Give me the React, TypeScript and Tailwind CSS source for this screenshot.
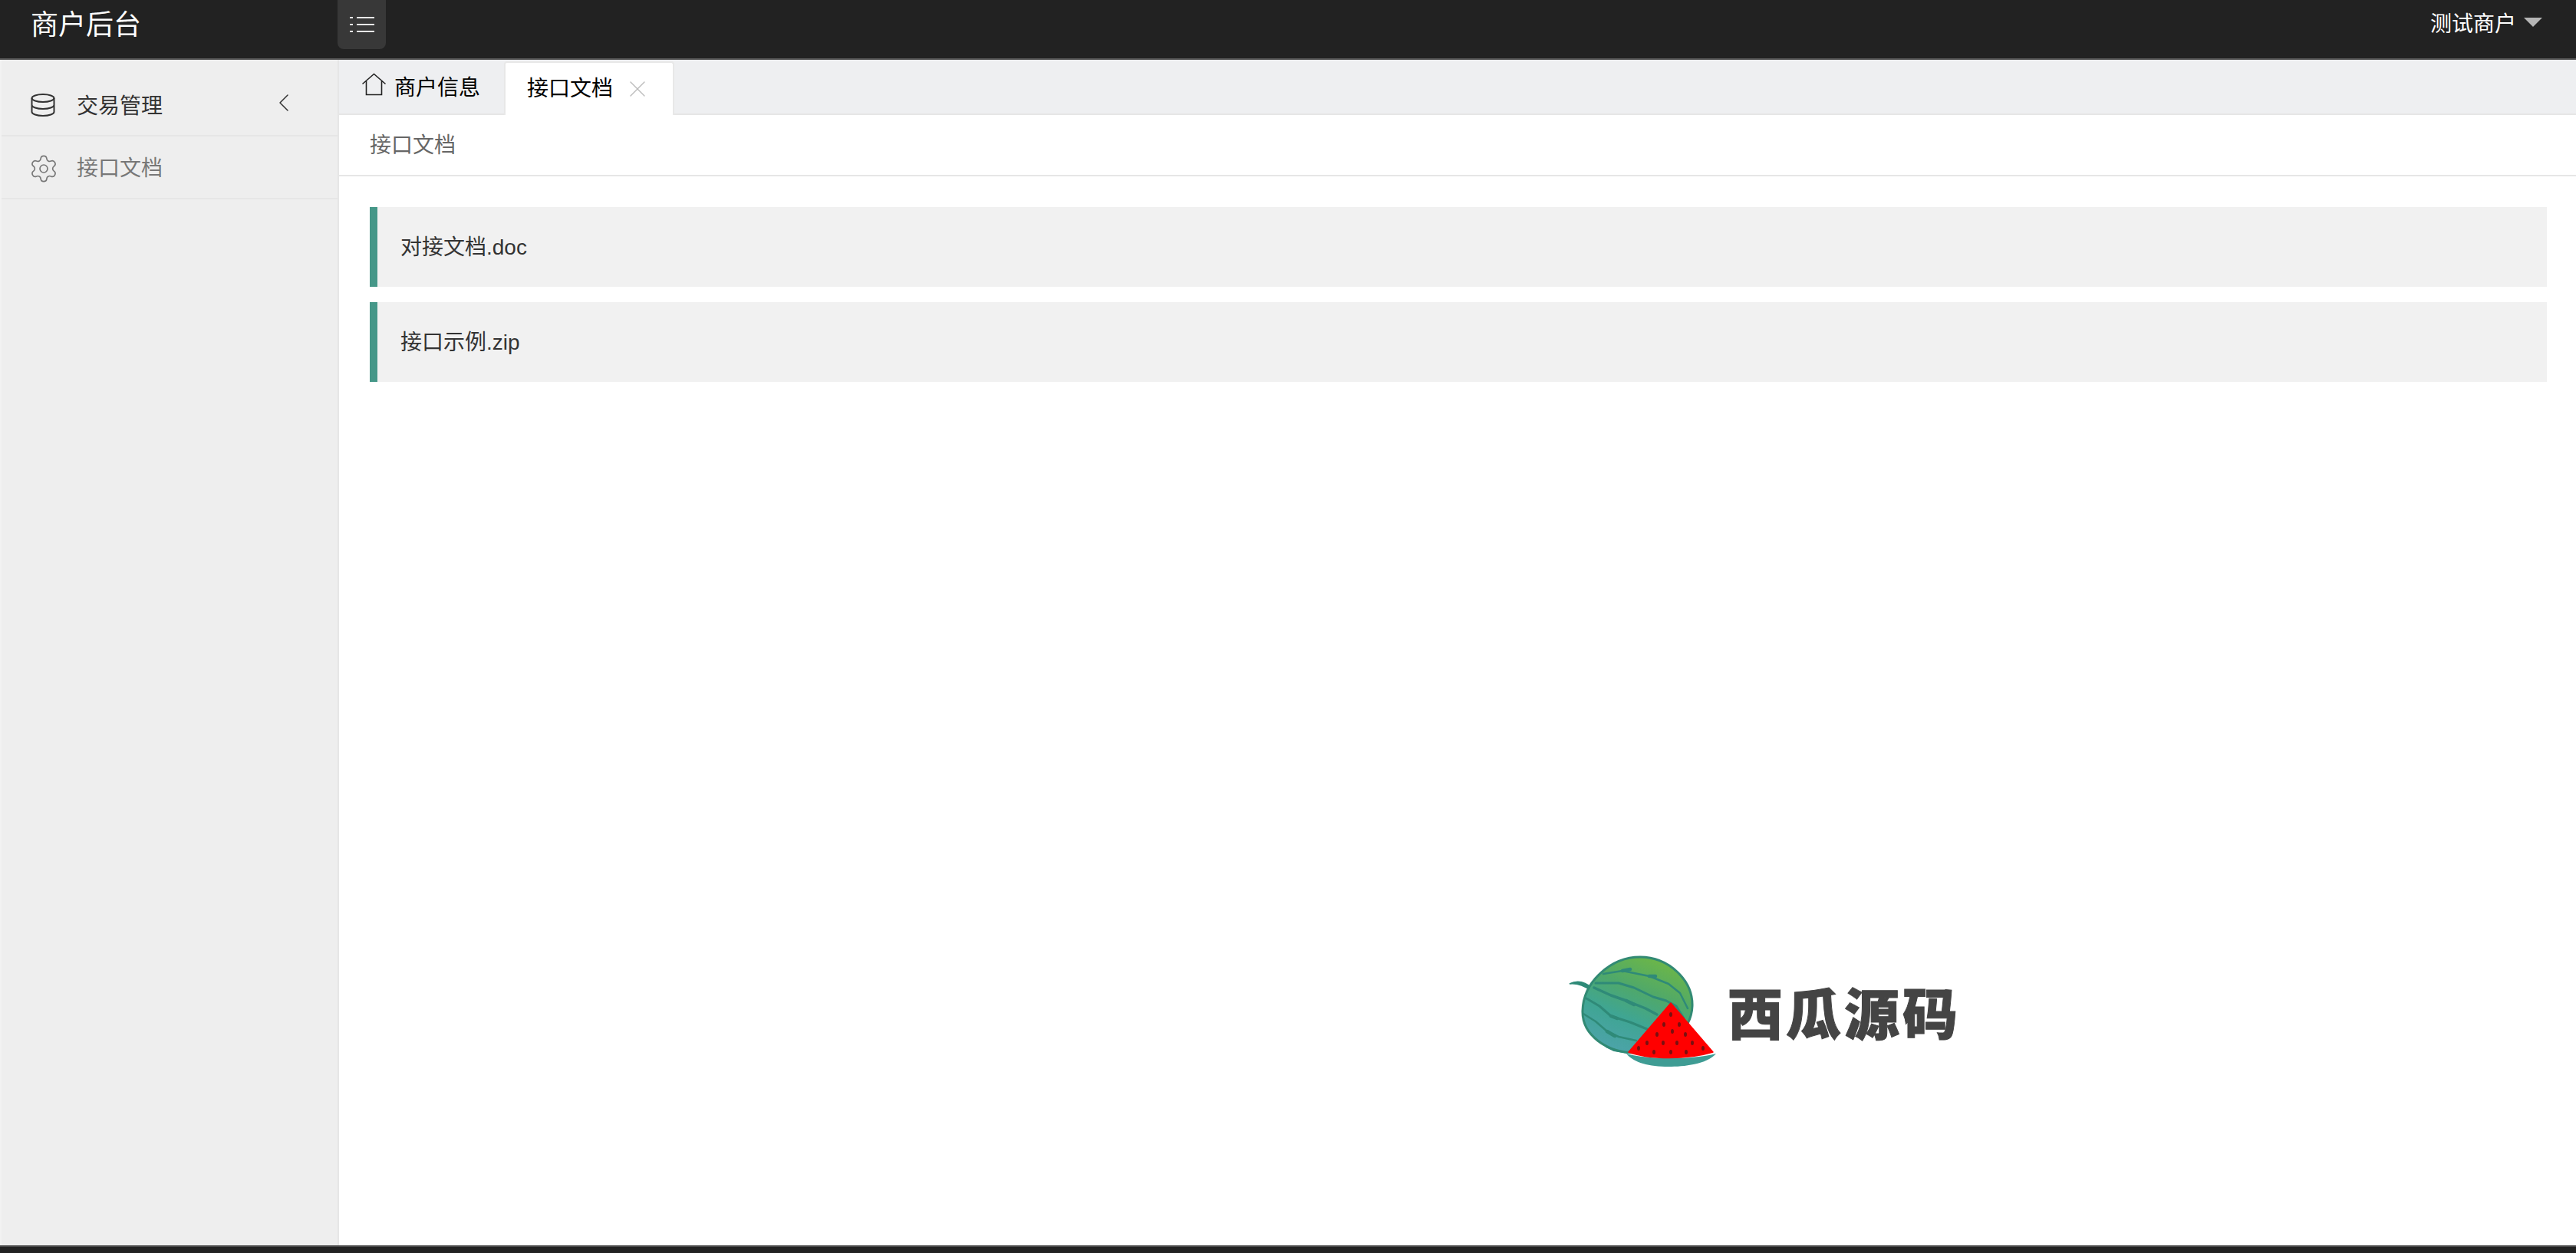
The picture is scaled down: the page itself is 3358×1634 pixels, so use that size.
import { ChevronLeft, Settings, X } from "lucide-react";

const seeds = [
  [178, 103], [169, 116], [189, 116], [160, 129], [180, 125], [197, 129], [147, 140], [168, 140],
  [186, 140], [206, 140], [136, 147], [156, 152], [178, 152], [198, 152], [220, 147],
];

function Watermelon() {
  return (
    <svg width="300" height="200" viewBox="0 0 300 200" className="shrink-0">
      <defs>
        <linearGradient id="melon" x1="0.75" y1="0.05" x2="0.3" y2="1">
          <stop offset="0" stopColor="#6cb648" />
          <stop offset="0.35" stopColor="#4fa86a" />
          <stop offset="0.65" stopColor="#3fa593" />
          <stop offset="1" stopColor="#4da3aa" />
        </linearGradient>
      </defs>
      <path d="M46 63 C56 58 66 60 76 69 L82 62 L74 72 C66 66 56 62 46 63Z" fill="#2f8a78" stroke="#2f8a78" strokeWidth="1.5" />
      <path d="M138 28 C175 28 207 58 206 92 C205 125 170 153 132 153 C95 153 62 130 63 98 C64 60 100 28 138 28Z" fill="url(#melon)" stroke="#328a74" strokeWidth="3" />
      <g fill="none" stroke="#2f8a78" strokeLinecap="round" strokeLinejoin="round">
        <path d="M90 50 L115 46 L135 50 L150 53 L160 57 L175 63 L190 75 L200 95" strokeWidth="2.5" />
        <path d="M80 62 L110 62 L130 68 L155 80 L172 85 L185 92 L195 108" strokeWidth="3" />
        <path d="M78 68 L100 78 L120 85 L145 95 L160 103" strokeWidth="3.5" />
        <path d="M68 82 L85 92 L100 105 L125 113 L147 122" strokeWidth="3" />
        <path d="M64 102 L80 112 L95 125 L110 132 L133 137" strokeWidth="2.5" />
        <path d="M94 145 L104 150 L122 153" strokeWidth="2" />
        <path d="M115 46 L125 44 M150 53 L158 53 M120 85 L130 90 M100 105 L108 108 M95 125 L105 131" strokeWidth="4.5" />
      </g>
      <path d="M120 154 C150 162 205 162 237 154 C225 168 195 171 175 171 C150 171 130 166 120 154Z" fill="#3f9c94" />
      <path d="M178 88 L233 152 C200 162 150 162 123 152 Z" fill="#ff0000" stroke="#ff0000" strokeLinejoin="round" strokeWidth="1.5" />
      {seeds.map(([x, y]) => (
        <ellipse key={`${x}-${y}`} cx={x} cy={y} rx="2" ry="3" fill="#7a1010" />
      ))}
    </svg>
  );
}

export default function App() {
  return (
    <div className="relative flex h-screen flex-col overflow-hidden bg-white font-['Liberation_Sans','Noto_Sans_CJK_SC',sans-serif] text-[28px]">
      <header className="flex h-[78px] shrink-0 border-b-2 border-[#555] bg-[#222] text-white">
        <div className="w-[440px] pl-10 pt-2 text-[36px] leading-[50px]">商户后台</div>
        <button className="flex h-16 w-[63px] items-center justify-center rounded-b-lg bg-[#383838]">
          <svg width="34" height="26" viewBox="0 0 34 26" fill="none" stroke="#e8e8e8" strokeWidth="2">
            <path d="M1 4h4M10 4h23M1 13h4M10 13h23M1 22h4M10 22h23" />
          </svg>
        </button>
        <div className="ml-auto flex h-[64px] items-center gap-[10px] pr-[44px]">
          <span className="leading-none">测试商户</span>
          <span className="mb-[6px] h-0 w-0 border-x-12 border-t-12 border-x-transparent border-t-[#b5b5b5]" />
        </div>
      </header>

      <div className="flex min-h-0 flex-1">
        <aside className="w-[442px] shrink-0 border-x-2 border-x-[#e6e6e6] border-l-[#f2f2f2] bg-[#eee]">
          <div className="flex h-[100px] items-center border-b-2 border-[#e6e6e6] pl-[38px] pr-[50px] pt-[24px] text-[#333]">
            <svg width="32" height="30" viewBox="0 0 32 30" fill="none" stroke="#333" strokeWidth="2" className="mb-1 shrink-0">
              <ellipse cx="16" cy="6" rx="14.5" ry="5" />
              <path d="M1.500 6v18c0 2.800 6.500 5 14.500 5s14.500-2.200 14.500-5V6M1.500 15c0 2.800 6.500 5 14.500 5s14.500-2.200 14.500-5" />
            </svg>
            <span className="ml-[28px]">交易管理</span>
            <ChevronLeft className="mb-[10px] ml-auto" size={40} strokeWidth={0.9} />
          </div>
          <div className="flex h-[82px] items-center border-b-2 border-[#e6e6e6] pl-[35px] pt-1 text-[#777]">
            <Settings size={40} strokeWidth={1} className="shrink-0" />
            <span className="ml-[23px]">接口文档</span>
          </div>
        </aside>

        <main className="min-w-0 flex-1">
          <div className="flex h-[72px] border-b-2 border-[#e6e6e6] bg-[#eeeff1] text-black">
            <div className="flex w-[215px] items-center gap-[10px] pl-[29px] pt-1">
              <svg width="33" height="30" viewBox="0 0 33 30" fill="none" stroke="#222" strokeWidth="1.6" className="mb-[10px] shrink-0">
                <path d="M1.500 14.500 16.500 1.500l15 13M6.500 11v17.500h20V11" />
              </svg>
              <span className="leading-none">商户信息</span>
            </div>
            <div className="mt-[2px] mb-[-2px] flex w-[222px] items-center rounded-t-sm border-x-2 border-t-2 border-[#e8e8e8] bg-white pl-[28px]">
              <span className="leading-none">接口文档</span>
              <X className="ml-[14px] text-[#bbb]" size={36} strokeWidth={0.9} />
            </div>
          </div>

          <div className="flex h-[80px] items-center border-b-2 border-[#e6e6e6] pl-10 pt-[2px] text-[#666]">接口文档</div>

          <div className="flex flex-col gap-5 pt-10 pr-[38px] pl-10">
            <div className="flex h-[104px] items-center border-l-10 border-[#459788] bg-[#f1f1f1] pl-[30px] pt-[2px] text-[#333]">对接文档.doc</div>
            <div className="flex h-[104px] items-center border-l-10 border-[#459788] bg-[#f1f1f1] pl-[30px] pt-[2px] text-[#333]">接口示例.zip</div>
          </div>
        </main>
      </div>

      <footer className="h-[10px] shrink-0 border-t-2 border-[#4a4a4a] bg-[#222]" />

      {/* watermark over the page */}
      <div className="absolute top-[1220px] left-[2000px] flex items-start">
        <Watermelon />
        <span className="mt-[50px] -ml-[48px] text-[72px] leading-[96px] font-black tracking-[4px] whitespace-nowrap text-[#444] [-webkit-text-stroke:1px_#444] font-['Noto_Sans_CJK_SC',sans-serif]">西瓜源码</span>
      </div>
    </div>
  );
}
